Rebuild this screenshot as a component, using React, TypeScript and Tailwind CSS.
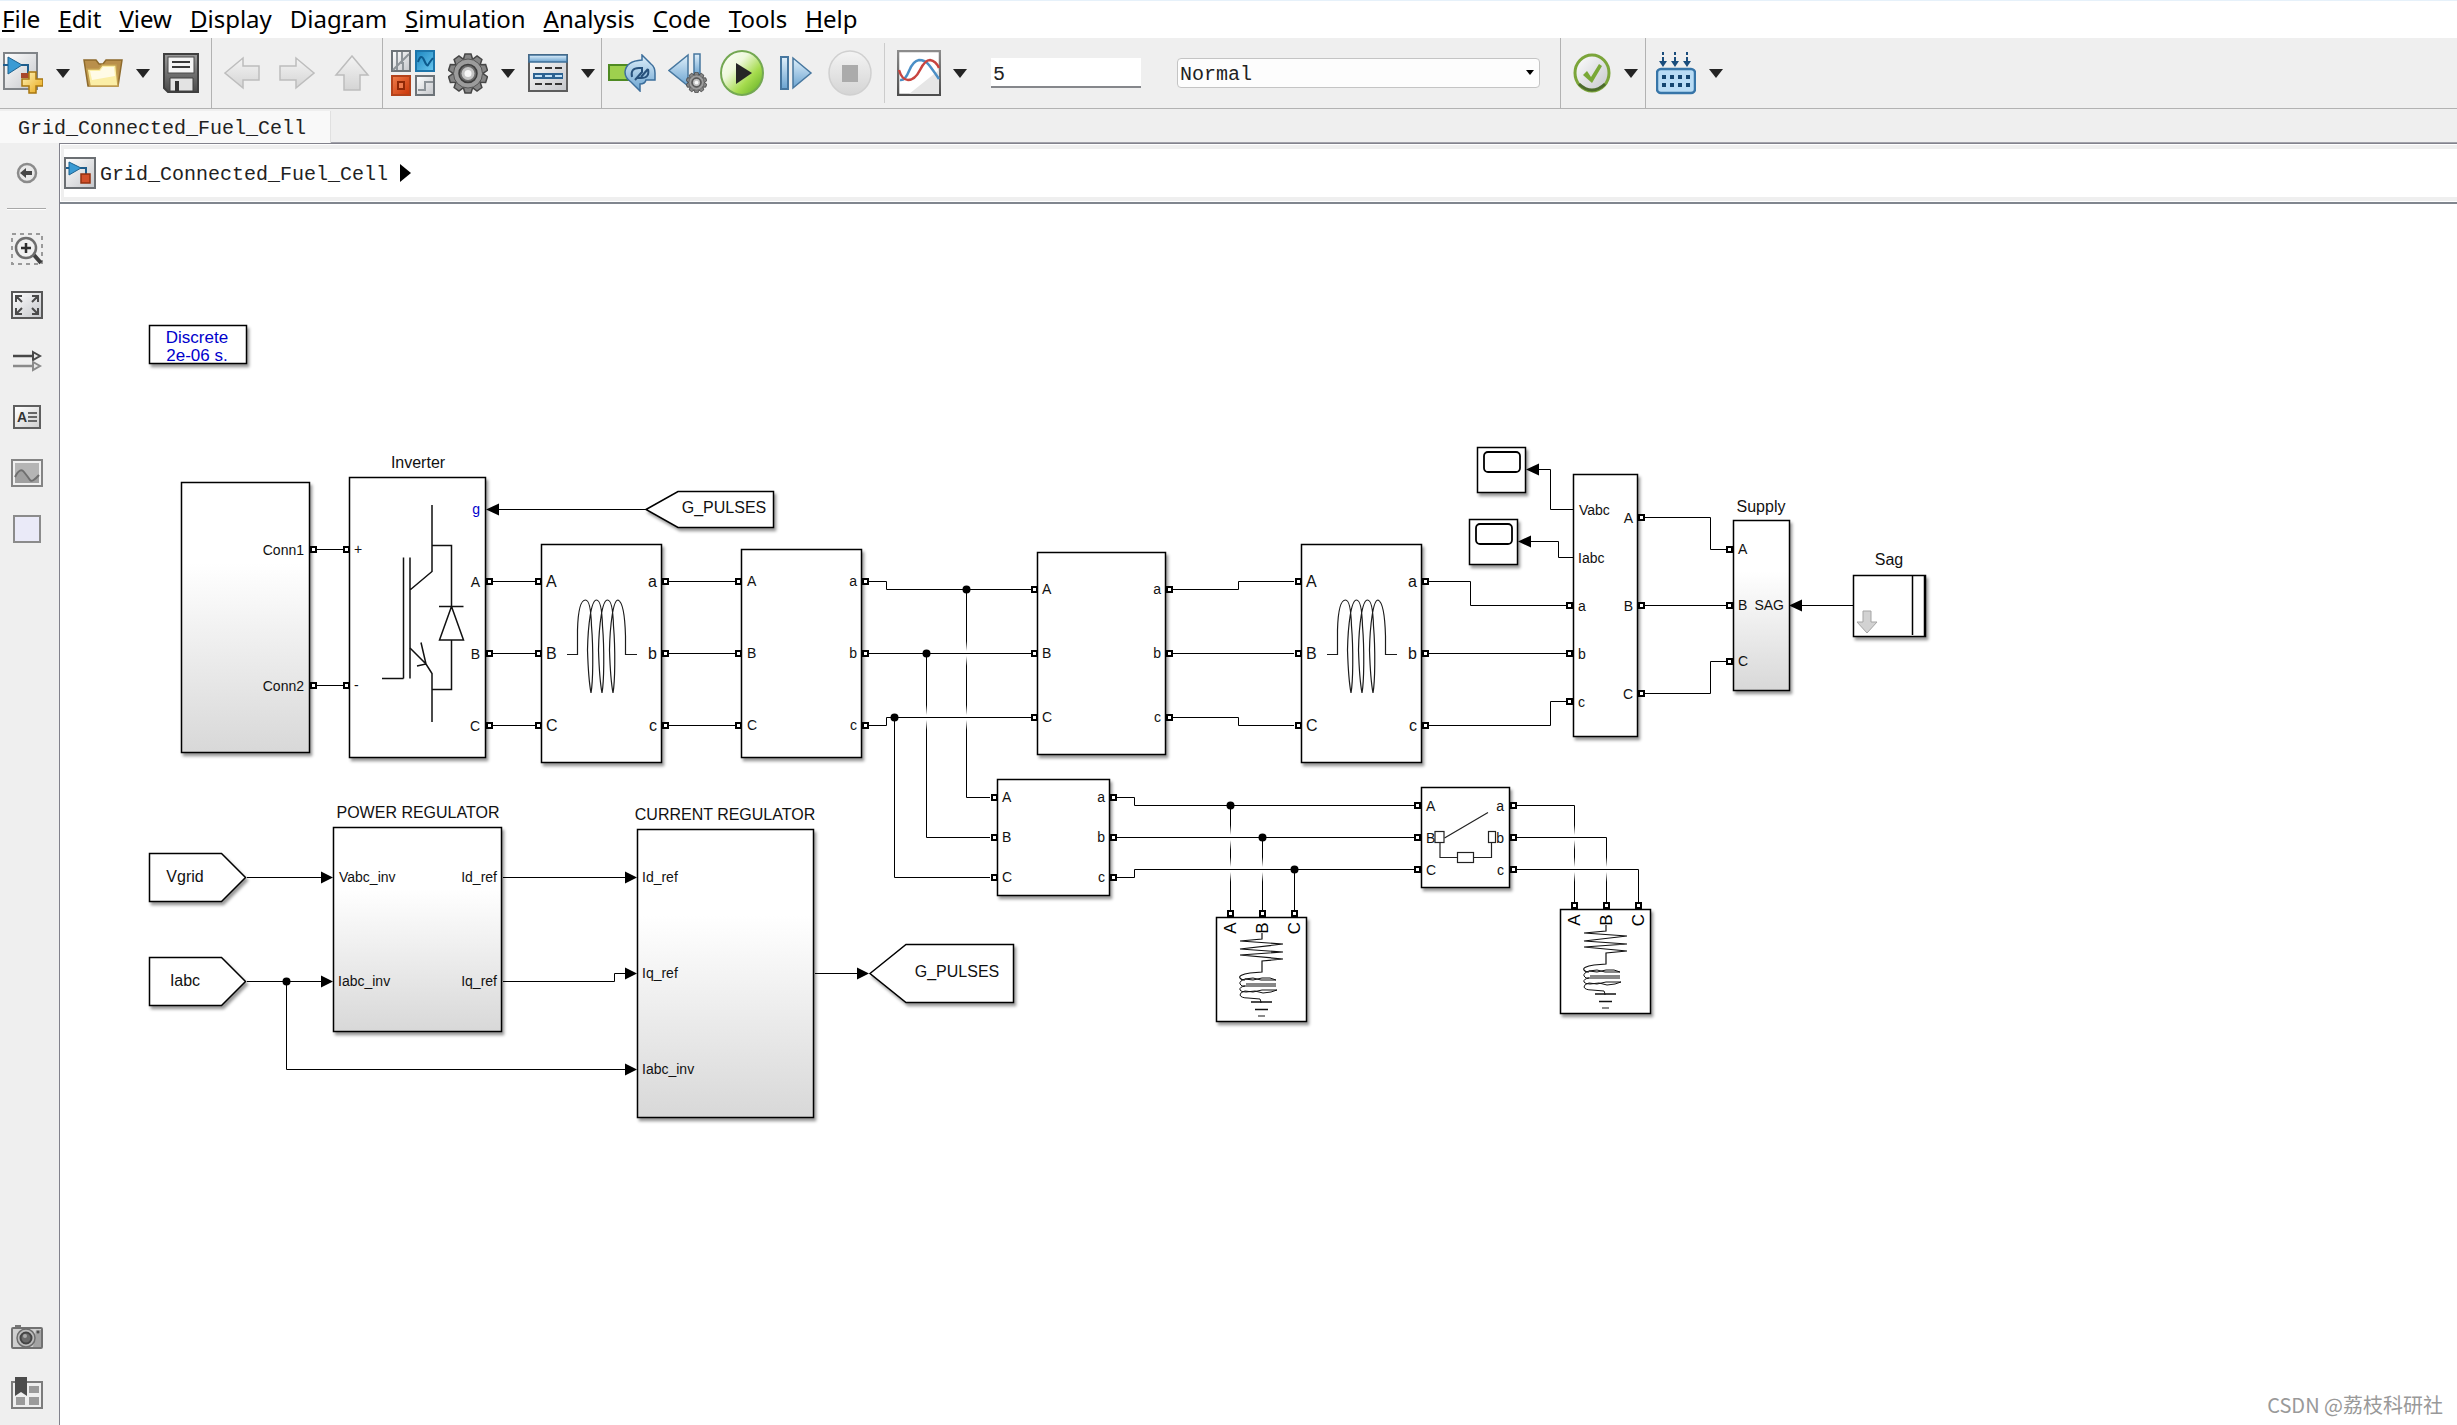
import type { ReactNode } from "react";

const MENUS = [
  ["", "F", "ile"],
  ["", "E", "dit"],
  ["", "V", "iew"],
  ["", "D", "isplay"],
  ["Diag", "r", "am"],
  ["", "S", "imulation"],
  ["", "A", "nalysis"],
  ["", "C", "ode"],
  ["", "T", "ools"],
  ["", "H", "elp"],
];

/* ---------- toolbar icons ---------- */

function Defs() {
  return (
    <svg width="0" height="0" className="absolute" aria-hidden="true">
      <defs>
        <linearGradient id="gPaper" x1="0" y1="0" x2="1" y2="1">
          <stop offset="0" stopColor="#ffffff" />
          <stop offset="1" stopColor="#c4c6ca" />
        </linearGradient>
        <linearGradient id="gBlue" x1="0" y1="0" x2="0" y2="1">
          <stop offset="0" stopColor="#e0f0fb" />
          <stop offset="1" stopColor="#6aa3d0" />
        </linearGradient>
        <linearGradient id="gGold" x1="0" y1="0" x2="1" y2="1">
          <stop offset="0" stopColor="#fff6bd" />
          <stop offset="1" stopColor="#e8a512" />
        </linearGradient>
        <linearGradient id="gSteel" x1="0" y1="0" x2="0" y2="1">
          <stop offset="0" stopColor="#9a9a9a" />
          <stop offset="1" stopColor="#4a4a4a" />
        </linearGradient>
        <linearGradient id="gFrame" x1="0" y1="0" x2="0" y2="1">
          <stop offset="0" stopColor="#8c8c8c" />
          <stop offset="1" stopColor="#4d4d4d" />
        </linearGradient>
        <linearGradient id="gGhost" x1="0" y1="0" x2="0" y2="1">
          <stop offset="0" stopColor="#f4f4f4" />
          <stop offset="1" stopColor="#d4d4d4" />
        </linearGradient>
        <linearGradient id="gGreen" x1="0" y1="0" x2="1" y2="1">
          <stop offset="0" stopColor="#ffffff" />
          <stop offset="0.35" stopColor="#eef8dc" />
          <stop offset="0.65" stopColor="#a6dc4e" />
          <stop offset="1" stopColor="#58a81e" />
        </linearGradient>
        <linearGradient id="gRed" x1="0" y1="0" x2="1" y2="1">
          <stop offset="0" stopColor="#ef7d4b" />
          <stop offset="1" stopColor="#c93407" />
        </linearGradient>
        <linearGradient id="gSky" x1="0" y1="0" x2="1" y2="1">
          <stop offset="0" stopColor="#1c86c0" />
          <stop offset="1" stopColor="#6cc8f0" />
        </linearGradient>
        <linearGradient id="gBlock" x1="0" y1="0" x2="0" y2="1">
          <stop offset="0.3" stopColor="#ffffff" />
          <stop offset="1" stopColor="#d8d8d8" />
        </linearGradient>
        <linearGradient id="gHop" x1="0" y1="0" x2="0" y2="1">
          <stop offset="0" stopColor="#ffffff" stopOpacity="0" />
          <stop offset="0.4" stopColor="#ffffff" />
          <stop offset="0.6" stopColor="#ffffff" />
          <stop offset="1" stopColor="#ffffff" stopOpacity="0" />
        </linearGradient>
        <filter id="shade" x="-10%" y="-10%" width="125%" height="125%">
          <feDropShadow dx="2" dy="3" stdDeviation="1.5" floodColor="#000000" floodOpacity="0.4" />
        </filter>
      </defs>
    </svg>
  );
}

function NewIcon() {
  return (
    <svg width="40" height="42" viewBox="0 0 40 42">
      <rect x="1" y="1" width="33" height="36" fill="url(#gPaper)" stroke="#808488" strokeWidth="2" />
      <path d="M0 13h5M18 13h7v8" fill="none" stroke="#1f5d8c" strokeWidth="2" />
      <path d="M5 5l14 8-14 9z" fill="#3b9bd4" stroke="#1d628f" />
      <path d="M18 21h9v5h-9z" fill="#a8472c" />
      <path d="M26 20h7v7h7v7h-7v7h-7v-7h-7v-7h7z" fill="url(#gGold)" stroke="#a87710" strokeWidth="1.5" />
    </svg>
  );
}

function OpenIcon() {
  return (
    <svg width="40" height="32" viewBox="0 0 40 32">
      <path d="M1 3h12l3 4h4l3-4h16l-4 26H5z" fill="#b98f4b" stroke="#8d6a2c" strokeWidth="1.5" />
      <path d="M4 12h12l3-4h14l2 21H7z" fill="#fbeea6" stroke="#c3a050" strokeWidth="1.5" />
      <path d="M7 14h10l3-4h11l1 9-23 4z" fill="#fffbe6" />
    </svg>
  );
}

function SaveIcon() {
  return (
    <svg width="36" height="40" viewBox="0 0 36 40">
      <path d="M1 1h34v38H5l-4-4z" fill="url(#gSteel)" stroke="#3f3f3f" strokeWidth="2" />
      <rect x="5" y="4" width="26" height="16" fill="#f5f5f5" stroke="#4a4a4a" />
      <path d="M9 9h18M9 14h18" stroke="#3a3a3a" strokeWidth="2" />
      <path d="M7 25h23v13H7z" fill="#e3e3e3" stroke="#404040" />
      <path d="M12 28h4v10h-4z" fill="#333333" />
    </svg>
  );
}

function ArrowIcon({ d }: { d: string }) {
  return (
    <svg width="36" height="36" viewBox="0 0 36 36">
      <path d={d} fill="url(#gGhost)" stroke="#bdbdbd" strokeWidth="1.5" />
    </svg>
  );
}

function LibraryIcon() {
  return (
    <svg width="44" height="46" viewBox="0 0 44 46">
      <rect x="1" y="1" width="18" height="20" fill="url(#gPaper)" stroke="#6d7378" strokeWidth="2" />
      <path d="M6 2v18M11 2v12M2 20l16-16M12 20V12" stroke="#8d9398" strokeWidth="2" fill="none" />
      <rect x="25" y="1" width="18" height="20" fill="url(#gSky)" stroke="#1d75aa" strokeWidth="2" />
      <path d="M27 12q3-9 6-2t4 5 5-7" fill="none" stroke="#0c5a8d" strokeWidth="2" />
      <rect x="1" y="26" width="18" height="19" fill="url(#gRed)" stroke="#b3421b" strokeWidth="2" />
      <rect x="7" y="32" width="6" height="7" fill="#ef7a4d" stroke="#8f2706" strokeWidth="2" />
      <rect x="25" y="26" width="18" height="19" fill="url(#gPaper)" stroke="#6d7378" strokeWidth="2" />
      <path d="M27 40h7v-8h8" fill="none" stroke="#8d9398" strokeWidth="2" />
    </svg>
  );
}

const TEETH = [0, 36, 72, 108, 144, 180, 216, 252, 288, 324];

function Gear({ size }: { size: number }) {
  return (
    <svg width={size} height={size} viewBox="0 0 40 40">
      {TEETH.map((a) => (
        <path key={a} d="M15 7l2-6.500h6l2 6.500z" transform={`rotate(${a} 20 20)`} fill="#858585" stroke="#464646" strokeWidth="1.500" />
      ))}
      <circle cx="20" cy="20" r="14.500" fill="#9c9c9c" stroke="#565656" />
      <circle cx="20" cy="20" r="9" fill="#6b6b6b" stroke="#3c3c3c" strokeWidth="1.500" />
      <circle cx="20" cy="20" r="6.500" fill="#c6c6c6" />
      <circle cx="20" cy="20" r="3.500" fill="#f8f8f8" />
    </svg>
  );
}

function ExplorerIcon() {
  return (
    <svg width="40" height="38" viewBox="0 0 40 38">
      <rect x="1" y="1" width="38" height="36" fill="url(#gPaper)" stroke="#5d5d5d" strokeWidth="2" />
      <rect x="1" y="1" width="38" height="7" fill="url(#gBlue)" stroke="#3e6f98" strokeWidth="1.500" />
      <path d="M7 14h7m3 0h7m3 0h7M7 30h7m3 0h7m3 0h7" stroke="#333333" strokeWidth="2" />
      <rect x="5" y="19" width="30" height="6" fill="#2c6292" />
      <path d="M7 22h7m3 0h7m3 0h7" stroke="#bfe0f7" strokeWidth="2" />
    </svg>
  );
}

function UpdateIcon() {
  return (
    <svg width="48" height="38" viewBox="0 0 48 38">
      <rect x="1" y="11" width="20" height="15" fill="#9ed04e" stroke="#4f8a22" strokeWidth="2" />
      <path d="M34 1l9 9q4 3 4 9v7h-9q-1 4-6 4v7l-9-9q-6-4-6-10 1-11 17-12z" fill="url(#gBlue)" stroke="#3d6f9c" strokeWidth="1.500" />
      <path d="M24 23q-2-9 7-9h3v4l-7 8M40 15q2 9-7 9h-4" fill="none" stroke="#27517c" strokeWidth="2" />
      <path d="M40 15l-7 8" stroke="#27517c" strokeWidth="2" />
    </svg>
  );
}

function StepBackIcon() {
  return (
    <svg width="40" height="40" viewBox="0 0 40 40">
      <path d="M20 2v31L1 17.500z" fill="url(#gBlue)" stroke="#47779f" strokeWidth="1.500" />
      <rect x="26" y="1" width="6" height="21" fill="url(#gBlue)" stroke="#47779f" strokeWidth="1.500" />
      <svg x="18" y="19" width="21" height="21">
        <Gear size={21} />
      </svg>
    </svg>
  );
}

function RunIcon() {
  return (
    <svg width="44" height="46" viewBox="0 0 44 46">
      <ellipse cx="22" cy="23" rx="21" ry="22" fill="url(#gGreen)" stroke="#74a852" strokeWidth="2" />
      <path d="M16 13l16 10-16 11z" fill="#262626" />
    </svg>
  );
}

function StepIcon() {
  return (
    <svg width="34" height="34" viewBox="0 0 34 34">
      <rect x="2" y="1" width="7" height="32" fill="url(#gBlue)" stroke="#47779f" strokeWidth="2" />
      <path d="M14 2v30l18-15z" fill="url(#gBlue)" stroke="#47779f" strokeWidth="1.500" />
    </svg>
  );
}

function StopIcon() {
  return (
    <svg width="44" height="46" viewBox="0 0 44 46">
      <ellipse cx="22" cy="23" rx="21" ry="22" fill="url(#gGhost)" stroke="#d0d0d0" strokeWidth="1.500" />
      <rect x="14" y="15" width="16" height="17" fill="#ababab" />
    </svg>
  );
}

function InspectorIcon() {
  return (
    <svg width="44" height="46" viewBox="0 0 44 46">
      <rect x="1" y="1" width="42" height="44" fill="#ffffff" stroke="url(#gFrame)" strokeWidth="2.500" />
      <path d="M42 20v24H12z" fill="#e6e6e6" />
      <path d="M3 30q5 1 9-9t10-11q6 0 10 5t10 14" fill="none" stroke="#4b8fc6" strokeWidth="2.500" />
      <path d="M2 20q3 10 9 10 7 0 12-10t10-10q6 1 9 8" fill="none" stroke="#c8443f" strokeWidth="2.500" />
    </svg>
  );
}

function CheckIcon() {
  return (
    <svg width="38" height="40" viewBox="0 0 38 40">
      <ellipse cx="19" cy="20" rx="17" ry="18" fill="url(#gPaper)" stroke="#7ba53a" strokeWidth="3" />
      <path d="M6 31q13 12 26 0" fill="none" stroke="#4c6b2c" strokeWidth="3" />
      <path d="M10 22l4-4 4 6L26 11l3 2-10 17z" fill="#79a836" />
    </svg>
  );
}

function BuildIcon() {
  return (
    <svg width="40" height="44" viewBox="0 0 40 44">
      {[7, 19, 31].map((x) => (
        <g key={x} fill="#1a4d7c">
          <rect x={x - 1} y="1" width="2" height="3" />
          <rect x={x - 1} y="6" width="2" height="5" />
          <path d={`M${x - 4} 10h8l-4 6z`} />
        </g>
      ))}
      <rect x="1" y="18" width="38" height="24" rx="4" fill="#b9dcf5" stroke="#3775a8" strokeWidth="2.500" />
      {[6, 14, 22, 30].map((x) => (
        <g key={x} fill="#14456f">
          <rect x={x} y="24" width="4" height="4" />
          <rect x={x} y="32" width="4" height="4" />
        </g>
      ))}
    </svg>
  );
}

function ModelIcon() {
  return (
    <svg width="32" height="32" viewBox="0 0 32 32">
      <rect x="1" y="1" width="30" height="30" fill="url(#gPaper)" stroke="#6b6f73" strokeWidth="2" />
      <path d="M2 11h3M16 11h6v6" fill="none" stroke="#1f5d8c" strokeWidth="2" />
      <path d="M5 5l12 6-12 7z" fill="#3b9bd4" stroke="#1d628f" />
      <rect x="17" y="17" width="9" height="9" fill="#d2502a" stroke="#94300f" strokeWidth="1.500" />
    </svg>
  );
}

/* ---------- palette icons ---------- */

function HideIcon() {
  return (
    <svg width="22" height="22" viewBox="0 0 22 22">
      <circle cx="11" cy="11" r="9" fill="#e9e9e9" stroke="#8b8b8b" strokeWidth="2.500" />
      <path d="M4 11l6-5v3h6v4h-6v3z" fill="#474747" />
    </svg>
  );
}

function ZoomIcon() {
  return (
    <svg width="32" height="32" viewBox="0 0 32 32">
      <rect x="1" y="1" width="30" height="30" fill="none" stroke="#9a9a9a" strokeWidth="2" strokeDasharray="4 4" />
      <path d="M23 22l7 8" stroke="#3f3f3f" strokeWidth="4" />
      <circle cx="15" cy="15" r="10" fill="#f1f1f1" stroke="#6e6e6e" strokeWidth="2.500" />
      <path d="M15 10v10M10 15h10" stroke="#2f2f2f" strokeWidth="2.500" />
    </svg>
  );
}

function FitIcon() {
  return (
    <svg width="32" height="28" viewBox="0 0 32 28">
      <rect x="1" y="1" width="30" height="26" fill="url(#gPaper)" stroke="#585858" strokeWidth="2" />
      <path d="M5 11V5h6M21 5h6v6M27 17v6h-6M11 23H5v-6M5 5l6 6M27 5l-6 6M27 23l-6-6M5 23l6-6" fill="none" stroke="#4a4a4a" strokeWidth="2" />
    </svg>
  );
}

function SampleIcon() {
  return (
    <svg width="30" height="22" viewBox="0 0 30 22">
      <path d="M1 6h22" stroke="#474747" strokeWidth="2.500" />
      <path d="M21 2l7 4-7 4z" fill="#e8e8e8" stroke="#474747" strokeWidth="2" />
      <path d="M1 16h22" stroke="#8a8a8a" strokeWidth="2.500" />
      <path d="M21 12l7 4-7 4z" fill="#e8e8e8" stroke="#8a8a8a" strokeWidth="2" />
    </svg>
  );
}

function ImageIcon() {
  return (
    <svg width="32" height="28" viewBox="0 0 32 28">
      <rect x="1" y="1" width="30" height="26" fill="#f0f0f0" stroke="#848484" strokeWidth="2" />
      <rect x="4" y="4" width="24" height="20" fill="#b5b5b5" />
      <path d="M4 18q5-10 9-5t6 8 9-5v8H4z" fill="#a0a0a0" />
      <path d="M4 18q5-10 9-5t6 8 9-5" fill="none" stroke="#6f6f6f" strokeWidth="2" />
    </svg>
  );
}

function CameraIcon() {
  return (
    <svg width="32" height="26" viewBox="0 0 32 26">
      <path d="M4 1h6v3H4z" fill="#777777" />
      <rect x="1" y="4" width="30" height="20" rx="1" fill="#d0d0d0" stroke="#717171" strokeWidth="2" />
      <path d="M25 6h5v17h-8z" fill="#a3a3a3" />
      <circle cx="15" cy="14" r="9" fill="#bdbdbd" stroke="#6d6d6d" strokeWidth="1.500" />
      <circle cx="15" cy="14" r="5.500" fill="#6a6a6a" stroke="#444444" strokeWidth="2" />
      <circle cx="14" cy="12" r="2" fill="#a9a9a9" />
      <circle cx="27" cy="8" r="1.500" fill="#4f4f4f" />
    </svg>
  );
}

function BookmarkIcon() {
  return (
    <svg width="32" height="32" viewBox="0 0 32 32">
      <rect x="1" y="5" width="30" height="26" fill="#eeeeee" stroke="#7c7c7c" strokeWidth="2" />
      <path d="M18 9h10v7H18zM5 20h9v8H5zM18 20h10v8H18z" fill="#9a9a9a" />
      <path d="M4 0h12v19l-6-4-6 4z" fill="#4b4b4b" />
    </svg>
  );
}

/* ---------- toolbar pieces ---------- */

function IconButton({ label, className = "", children }: { label: string; className?: string; children: ReactNode }) {
  return (
    <button type="button" aria-label={label} className={`flex shrink-0 items-center justify-center ${className}`}>
      {children}
    </button>
  );
}

function DropButton({ label }: { label: string }) {
  return (
    <IconButton label={label}>
      <svg width="14" height="9" viewBox="0 0 14 9">
        <path d="M0 0h14L7 9z" fill="#242424" />
      </svg>
    </IconButton>
  );
}

function Group({ className = "", children }: { className?: string; children: ReactNode }) {
  return <div className={`flex h-full shrink-0 items-center ${className}`}>{children}</div>;
}

function Toolbar() {
  return (
    <div className="flex h-[72px] shrink-0 items-center border-t border-b border-t-white border-b-[#b2b2b2] bg-[#efefef]">
      <Group className="w-[212px] gap-[13px] border-r border-[#b2b2b2] pl-[3px]">
        <IconButton label="New model" className="w-10"><NewIcon /></IconButton>
        <DropButton label="New menu" />
        <IconButton label="Open" className="w-10"><OpenIcon /></IconButton>
        <DropButton label="Open menu" />
        <IconButton label="Save" className="w-9"><SaveIcon /></IconButton>
      </Group>
      <Group className="w-[171px] gap-[19px] border-r border-[#b2b2b2] pl-3">
        <IconButton label="Back"><ArrowIcon d="M1 18L19 3v8h16v14H19v8z" /></IconButton>
        <IconButton label="Forward"><ArrowIcon d="M35 18L17 3v8H1v14h16v8z" /></IconButton>
        <IconButton label="Up"><ArrowIcon d="M18 1l16 19h-8v15H10V20H2z" /></IconButton>
      </Group>
      <Group className="w-[219px] gap-[13px] border-r border-[#b2b2b2] pl-2">
        <IconButton label="Library browser" className="w-11"><LibraryIcon /></IconButton>
        <IconButton label="Model settings" className="w-10"><Gear size={41} /></IconButton>
        <DropButton label="Settings menu" />
        <IconButton label="Model explorer" className="w-10"><ExplorerIcon /></IconButton>
        <DropButton label="Explorer menu" />
      </Group>
      <Group className="gap-[10px] pr-3 pl-[6px]">
        <IconButton label="Update diagram" className="w-12"><UpdateIcon /></IconButton>
        <IconButton label="Step back" className="w-11"><StepBackIcon /></IconButton>
        <IconButton label="Run" className="w-11"><RunIcon /></IconButton>
        <IconButton label="Step forward" className="w-11"><StepIcon /></IconButton>
        <IconButton label="Stop" className="w-11"><StopIcon /></IconButton>
      </Group>
      <div className="h-15 w-px shrink-0 bg-[#cccccc]" />
      <Group className="gap-3 border-r border-[#b2b2b2] pr-5 pl-3">
        <IconButton label="Data inspector" className="w-11"><InspectorIcon /></IconButton>
        <DropButton label="Inspector menu" />
        <input
          aria-label="Simulation stop time"
          defaultValue="5"
          className="ml-3 h-[30px] w-[150px] border-b-2 border-[#85878b] bg-white px-[2px] pt-1 font-['Liberation_Mono',monospace] text-xl text-[#222222]"
        />
        <div className="relative ml-6 w-[363px]">
          <select
            aria-label="Simulation mode"
            className="block h-[30px] w-full appearance-none rounded-sm border border-[#c4c4c4] bg-[#fdfdfd] px-[2px] pt-1 font-['Liberation_Mono',monospace] text-xl leading-6 text-[#222222]"
          >
            <option>Normal</option>
            <option>Accelerator</option>
          </select>
          <svg width="8" height="5" viewBox="0 0 8 5" className="pointer-events-none absolute top-3 right-[6px]">
            <path d="M0 0h8L4 5z" fill="#000000" />
          </svg>
        </div>
      </Group>
      <Group className="w-[85px] gap-[13px] border-r border-[#b2b2b2] pl-3">
        <IconButton label="Model advisor" className="w-[38px]"><CheckIcon /></IconButton>
        <DropButton label="Advisor menu" />
      </Group>
      <Group className="gap-[13px] pl-[10px]">
        <IconButton label="Build model" className="w-10"><BuildIcon /></IconButton>
        <DropButton label="Build menu" />
      </Group>
    </div>
  );
}

function Palette() {
  return (
    <aside className="flex w-[59px] shrink-0 flex-col items-start bg-[#efefef] pt-[14px] pb-4 pl-[11px]">
      <IconButton label="Hide browser" className="size-8"><HideIcon /></IconButton>
      <div className="-ml-1 mt-[19px] mb-[23px] h-[2px] w-[39px] border-t border-[#a8a8a8] bg-white" />
      <div className="flex flex-col gap-6">
        <IconButton label="Zoom" className="size-8"><ZoomIcon /></IconButton>
        <IconButton label="Fit to view" className="size-8"><FitIcon /></IconButton>
        <IconButton label="Sample time" className="size-8"><SampleIcon /></IconButton>
        <IconButton label="Annotation" className="size-8">
          <span className="flex h-6 w-7 items-center justify-center gap-px border-2 border-[#5f5f5f] bg-linear-to-br from-white to-[#d0d0d0] font-['Liberation_Sans',sans-serif] text-sm font-bold text-[#333333]">
            A
            <svg width="9" height="10" viewBox="0 0 9 10">
              <path d="M0 1h9M0 5h9M0 9h9" stroke="#666666" strokeWidth="2" />
            </svg>
          </span>
        </IconButton>
        <IconButton label="Image" className="size-8"><ImageIcon /></IconButton>
        <IconButton label="Area" className="size-8">
          <span className="size-7 border-2 border-[#8b8b8b] bg-[#eaeaf8]" />
        </IconButton>
      </div>
      <div className="mt-auto flex flex-col gap-6">
        <IconButton label="Screenshot" className="size-8"><CameraIcon /></IconButton>
        <IconButton label="Viewmarks" className="size-8"><BookmarkIcon /></IconButton>
      </div>
    </aside>
  );
}

/* ---------- diagram ---------- */

type PortLabel = { x: number; y: number; text: string; end?: boolean; big?: boolean; blue?: boolean };

const BLOCKS = [
  { x: 149, y: 325, w: 97, h: 38 },
  { x: 181, y: 482, w: 128, h: 270, shaded: true },
  { x: 349, y: 477, w: 136, h: 280 },
  { x: 541, y: 544, w: 120, h: 218 },
  { x: 741, y: 549, w: 120, h: 208 },
  { x: 1037, y: 552, w: 128, h: 202 },
  { x: 997, y: 779, w: 112, h: 116 },
  { x: 1301, y: 544, w: 120, h: 218 },
  { x: 1573, y: 474, w: 64, h: 262 },
  { x: 1477, y: 447, w: 48, h: 45 },
  { x: 1469, y: 519, w: 48, h: 45 },
  { x: 1733, y: 520, w: 56, h: 170, shaded: true },
  { x: 1853, y: 575, w: 72, h: 61 },
  { x: 1421, y: 787, w: 88, h: 100 },
  { x: 1216, y: 917, w: 90, h: 104 },
  { x: 1560, y: 909, w: 90, h: 104 },
  { x: 333, y: 827, w: 168, h: 204, shaded: true },
  { x: 637, y: 829, w: 176, h: 288, shaded: true },
];

const TAGS = [
  "M646 509.500l32-18h95.500v36H678z",
  "M149.500 853.500h72l24 24-24 24h-72z",
  "M149.500 957.500h72l24 24-24 24h-72z",
  "M870 973.500l36-29h107.500v58H906z",
];

const DROPS = [
  "M966.500 589.500V797.500H990",
  "M926.500 653.500V837.500H990",
  "M894.500 717.500V877.500H990",
  "M1230.500 805.500V911",
  "M1262.500 837.500V911",
  "M1294.500 869.500V911",
  "M1510 805.500H1574.500V903",
  "M1510 837.500H1606.500V903",
];

const HOPS = [
  [966, 653], [966, 717], [926, 717], [1230, 837], [1230, 869], [1262, 869], [1574, 837], [1574, 869], [1606, 869],
];

const WIRES = [
  "M317 549.500H343M317 685.500H343",
  "M498 509.500H646",
  "M493 581.500H535M493 653.500H535M493 725.500H535",
  "M669 581.500H735M669 653.500H735M669 725.500H735",
  "M869 581.500H886.500V589.500H1031",
  "M869 653.500H1031",
  "M869 725.500H886.500V717.500H1031",
  "M1172 589.500H1238.500V581.500H1294",
  "M1172 653.500H1294",
  "M1172 717.500H1238.500V725.500H1294",
  "M1429 581.500H1470.500V605.500H1566",
  "M1429 653.500H1566",
  "M1429 725.500H1550.500V701.500H1566",
  "M1538 469.500H1550.500V509.500H1575",
  "M1530 541.500H1558.500V557.500H1575",
  "M1645 517.500H1710.500V549.500H1726",
  "M1645 605.500H1726",
  "M1645 693.500H1710.500V661.500H1726",
  "M1800 605.500H1854",
  "M1117 797.500H1134.500V805.500H1414",
  "M1117 837.500H1414",
  "M1117 877.500H1134.500V869.500H1414",
  "M1517 869.500H1638.500V903",
  "M1510 837.500H1606",
  "M247 877.500H322M247 981.500H322",
  "M286.500 981.500V1069.500H626",
  "M503 877.500H626",
  "M503 981.500H614.500V973.500H626",
  "M815 973.500H858",
];

const DOTS = [
  [966, 589], [926, 653], [894, 717], [1230, 805], [1262, 837], [1294, 869], [286, 981],
];

const PORTS = [
  [313, 549], [313, 685], [346, 549], [346, 685],
  [489, 581], [489, 653], [489, 725], [538, 581], [538, 653], [538, 725],
  [665, 581], [665, 653], [665, 725], [738, 581], [738, 653], [738, 725],
  [865, 581], [865, 653], [865, 725], [1034, 589], [1034, 653], [1034, 717],
  [1169, 589], [1169, 653], [1169, 717], [1298, 581], [1298, 653], [1298, 725],
  [1425, 581], [1425, 653], [1425, 725], [1569, 605], [1569, 653], [1569, 701],
  [1641, 517], [1641, 605], [1641, 693], [1729, 549], [1729, 605], [1729, 661],
  [994, 797], [994, 837], [994, 877], [1113, 797], [1113, 837], [1113, 877],
  [1417, 805], [1417, 837], [1417, 869], [1513, 805], [1513, 837], [1513, 869],
  [1230, 913], [1262, 913], [1294, 913], [1574, 905], [1606, 905], [1638, 905],
];

const ARROWS = [
  "M486 509.500l13-6v12z",
  "M1526 469.500l13-6v12z",
  "M1518 541.500l13-6v12z",
  "M1789 605.500l13-6v12z",
  "M333 877.500l-12-6v12z",
  "M333 981.500l-12-6v12z",
  "M637 877.500l-12-6v12z",
  "M637 973.500l-12-6v12z",
  "M637 1069.500l-12-6v12z",
  "M869 973.500l-12-6v12z",
];

const LABELS: PortLabel[] = [
  { x: 304, y: 550, text: "Conn1", end: true },
  { x: 304, y: 686, text: "Conn2", end: true },
  { x: 354, y: 549, text: "+" },
  { x: 354, y: 685, text: "-" },
  { x: 480, y: 509, text: "g", end: true, blue: true },
  { x: 480, y: 582, text: "A", end: true },
  { x: 480, y: 654, text: "B", end: true },
  { x: 480, y: 726, text: "C", end: true },
  { x: 546, y: 581, text: "A", big: true },
  { x: 546, y: 653, text: "B", big: true },
  { x: 546, y: 725, text: "C", big: true },
  { x: 657, y: 581, text: "a", end: true, big: true },
  { x: 657, y: 653, text: "b", end: true, big: true },
  { x: 657, y: 725, text: "c", end: true, big: true },
  { x: 747, y: 581, text: "A" },
  { x: 747, y: 653, text: "B" },
  { x: 747, y: 725, text: "C" },
  { x: 857, y: 581, text: "a", end: true },
  { x: 857, y: 653, text: "b", end: true },
  { x: 857, y: 725, text: "c", end: true },
  { x: 1042, y: 589, text: "A" },
  { x: 1042, y: 653, text: "B" },
  { x: 1042, y: 717, text: "C" },
  { x: 1161, y: 589, text: "a", end: true },
  { x: 1161, y: 653, text: "b", end: true },
  { x: 1161, y: 717, text: "c", end: true },
  { x: 1306, y: 581, text: "A", big: true },
  { x: 1306, y: 653, text: "B", big: true },
  { x: 1306, y: 725, text: "C", big: true },
  { x: 1417, y: 581, text: "a", end: true, big: true },
  { x: 1417, y: 653, text: "b", end: true, big: true },
  { x: 1417, y: 725, text: "c", end: true, big: true },
  { x: 1579, y: 510, text: "Vabc" },
  { x: 1578, y: 558, text: "Iabc" },
  { x: 1578, y: 606, text: "a" },
  { x: 1578, y: 654, text: "b" },
  { x: 1578, y: 702, text: "c" },
  { x: 1633, y: 518, text: "A", end: true },
  { x: 1633, y: 606, text: "B", end: true },
  { x: 1633, y: 694, text: "C", end: true },
  { x: 1738, y: 549, text: "A" },
  { x: 1738, y: 605, text: "B" },
  { x: 1738, y: 661, text: "C" },
  { x: 1784, y: 605, text: "SAG", end: true },
  { x: 1002, y: 797, text: "A" },
  { x: 1002, y: 837, text: "B" },
  { x: 1002, y: 877, text: "C" },
  { x: 1105, y: 797, text: "a", end: true },
  { x: 1105, y: 837, text: "b", end: true },
  { x: 1105, y: 877, text: "c", end: true },
  { x: 1426, y: 806, text: "A" },
  { x: 1426, y: 838, text: "B" },
  { x: 1426, y: 870, text: "C" },
  { x: 1504, y: 806, text: "a", end: true },
  { x: 1504, y: 838, text: "b", end: true },
  { x: 1504, y: 870, text: "c", end: true },
  { x: 339, y: 877, text: "Vabc_inv" },
  { x: 338, y: 981, text: "Iabc_inv" },
  { x: 497, y: 877, text: "Id_ref", end: true },
  { x: 497, y: 981, text: "Iq_ref", end: true },
  { x: 642, y: 877, text: "Id_ref" },
  { x: 642, y: 973, text: "Iq_ref" },
  { x: 642, y: 1069, text: "Iabc_inv" },
];

const NAMES = [
  { x: 418, y: 468, text: "Inverter" },
  { x: 724, y: 513, text: "G_PULSES" },
  { x: 1761, y: 512, text: "Supply" },
  { x: 1889, y: 565, text: "Sag" },
  { x: 418, y: 818, text: "POWER REGULATOR" },
  { x: 725, y: 820, text: "CURRENT REGULATOR" },
  { x: 185, y: 882, text: "Vgrid" },
  { x: 185, y: 986, text: "Iabc" },
  { x: 957, y: 977, text: "G_PULSES" },
];

function Coil({ x }: { x: number }) {
  return (
    <path
      transform={`translate(${x} 600)`}
      d="M0 54.500H10.500V30C11 12 13 0 18.500 0C22 0 24 8 24.500 26C26.500 50 26 82 24 93C22.500 85 21 66 20.500 50C21 26 24 0 29.500 0C33 0 35 8 35.500 26C37.500 50 37 82 35 93C33.500 85 32 66 31.500 50C32 26 35 0 40.500 0C44 0 46 8 46.500 26C48.500 50 48 82 46 93C44.500 85 43 66 42.500 50C43 26 46 0 51 0C56 2 58 18 58.500 36V54.500H70"
      fill="none"
      stroke="#1c1c1c"
      strokeWidth="1.200"
    />
  );
}

// Series RL branch to ground, drawn inside a 90x104 load block.
function Load({ x, y }: { x: number; y: number }) {
  return (
    <g transform={`translate(${x} ${y})`}>
      <g fill="none" stroke="#111111">
        <path d="M46 16v6L24 24l43 3-43 5 43 3-43 3 43 4-21 2v11l-12 1q-12 2-10 5 1 2 5 2" strokeWidth="1.200" />
        <path d="M29 62l8-1 8 2h15l-6-2h-8l-9 2-8-1q-6 2-5 5 1 3 6 2" />
        <path d="M30 67h30M30 69h30" />
        <path d="M29 69q-6 1-5 4 1 2 6 2l9-1 8 2 8-1 6-2h-15l-9 2-8-1q-5 1-5 4 1 3 8 3l12 1q1 2 1 4" />
      </g>
      <path d="M35 85h21M39 92.500h13" stroke="#111111" strokeWidth="1.500" />
      <path d="M42 99h7" stroke="#8a8a8a" strokeWidth="2" />
      {["A", "B", "C"].map((t, i) => (
        <text key={t} textAnchor="middle" transform={`translate(${20 + i * 32} 11) rotate(-90)`} className="text-[17px]">
          {t}
        </text>
      ))}
    </g>
  );
}

function Diagram() {
  return (
    <svg width="1940" height="1000" viewBox="60 204 1940 1000" role="img" aria-label="Grid connected fuel cell model" className="block font-['Liberation_Sans',Arial,sans-serif]">
      <g fill="none" stroke="#000000">
        {DROPS.map((d) => <path key={d} d={d} />)}
      </g>
      {HOPS.map(([x, y]) => (
        <rect key={`${x}-${y}`} x={x - 1} y={y - 12} width="3" height="25" fill="url(#gHop)" />
      ))}
      <g fill="none" stroke="#000000">
        {WIRES.map((d) => <path key={d} d={d} />)}
      </g>
      <g stroke="#000000" strokeWidth="1.500" filter="url(#shade)">
        {BLOCKS.map((b) => (
          <rect key={`${b.x}-${b.y}`} x={b.x + 0.5} y={b.y + 0.5} width={b.w} height={b.h} fill={b.shaded ? "url(#gBlock)" : "#ffffff"} />
        ))}
        {TAGS.map((d) => <path key={d} d={d} fill="#ffffff" />)}
      </g>
      {DOTS.map(([x, y]) => <circle key={`${x}-${y}`} cx={x + 0.5} cy={y + 0.5} r="4" />)}
      <g fill="#ffffff" stroke="#000000" strokeWidth="2">
        {PORTS.map(([x, y]) => <rect key={`${x}-${y}`} x={x - 2} y={y - 2} width="5" height="5" />)}
      </g>
      {ARROWS.map((d) => <path key={d} d={d} />)}

      {/* IGBT with antiparallel diode */}
      <g fill="none" stroke="#111111" strokeWidth="1.500">
        <path d="M432 505V571.500L410 590M403.500 557.500V678.500M410 557.500V678.500M382 678.500H403.500" />
        <path d="M410 648L426 664L432 673.500V722M421 642.500L426 664L417 666" />
        <path d="M432 545.500H451.500V689.500H432M439 606.500H463.500" />
        <path d="M451.500 606.500L439.500 640H463.500z" fill="#ffffff" />
      </g>
      <Coil x={567} />
      <Coil x={1327} />

      <g fill="none" stroke="#000000" strokeWidth="1.800">
        <rect x="1484" y="452" width="36" height="20" rx="4" />
        <rect x="1476" y="524" width="36" height="20" rx="4" />
      </g>
      <path d="M1912.500 576v59M1924.500 576v60" stroke="#000000" strokeWidth="1.500" />
      <path d="M1863 611h8v11h6l-10 11-10-11h6z" fill="#d2d2d2" stroke="#a5a5a5" />

      {/* breaker contacts */}
      <g fill="none" stroke="#222222" strokeWidth="1.200">
        <path d="M1444.500 838L1488 812.500M1440 843V857.500H1457.500M1473.500 857.500H1491.500V843" />
        <rect x="1435" y="831.500" width="9" height="11" />
        <rect x="1488.500" y="831.500" width="7" height="11" />
        <rect x="1457.500" y="852.500" width="16" height="10" />
      </g>
      <Load x={1216} y={917} />
      <Load x={1560} y={909} />

      <g fill="#111111">
        {LABELS.map((l) => (
          <text
            key={`${l.x}-${l.y}`}
            x={l.x}
            y={l.y + (l.big ? 6 : 5)}
            textAnchor={l.end ? "end" : "start"}
            className={`${l.big ? "text-base" : "text-sm"} ${l.blue ? "fill-[#0000cc]" : ""}`}
          >
            {l.text}
          </text>
        ))}
        {NAMES.map((n) => (
          <text key={`${n.x}-${n.y}`} x={n.x} y={n.y} textAnchor="middle" className="text-base">{n.text}</text>
        ))}
      </g>
      <g fill="#0000cc" textAnchor="middle" className="text-[17px]">
        <text x="197" y="343">Discrete</text>
        <text x="197" y="361">2e-06 s.</text>
      </g>
    </svg>
  );
}

export default function App() {
  return (
    <div className="relative flex h-screen flex-col overflow-hidden bg-white text-black">
      <Defs />
      <nav className="flex h-[37px] shrink-0 items-center gap-[18px] border-t border-[#e6f1fa] pl-[2px] font-['Noto_Sans','Open_Sans',sans-serif] text-2xl leading-8">
        {MENUS.map(([pre, key, post]) => (
          <button key={pre + key + post} type="button">
            {pre}
            <span className="underline decoration-2 underline-offset-2">{key}</span>
            {post}
          </button>
        ))}
      </nav>
      <Toolbar />
      <div className="flex h-[34px] shrink-0 bg-[#efefef] font-['Liberation_Mono',monospace] text-xl text-[#222222]">
        <button type="button" className="mt-[2px] w-[331px] border-r border-[#e0e0e0] bg-[#f9f9f9] pt-1 pl-[18px] text-left">
          Grid_Connected_Fuel_Cell
        </button>
        <div className="grow border-b border-[#a2a2aa]" />
      </div>
      <div className="flex min-h-0 grow">
        <Palette />
        <main className="flex min-w-0 grow flex-col border-t border-l border-[#82828c]">
          <div className="shrink-0 border-b-2 border-[#80868e]">
            <div className="border-y border-l border-white bg-[#efefef] py-1 pl-[3px]">
              <div className="flex h-12 items-center bg-white font-['Liberation_Mono',monospace] text-xl text-[#222222]">
                <ModelIcon />
                <button type="button" className="ml-1 pt-1">Grid_Connected_Fuel_Cell</button>
                <svg width="11" height="18" viewBox="0 0 11 18" className="ml-3">
                  <path d="M0 0l11 9L0 18z" fill="#000000" />
                </svg>
              </div>
            </div>
          </div>
          <div className="min-h-0 grow overflow-hidden bg-white">
            <Diagram />
          </div>
        </main>
      </div>
      <p className="absolute right-[14px] bottom-2 font-['Noto_Sans_CJK_SC',sans-serif] text-xl leading-6 text-[#999999]">CSDN @荔枝科研社</p>
    </div>
  );
}
